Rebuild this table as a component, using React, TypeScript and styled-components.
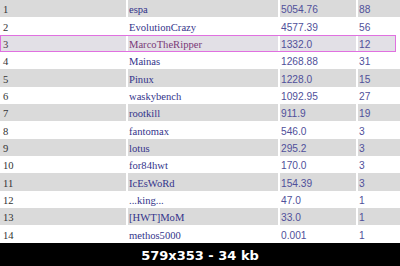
import React from "react";
import styled, { createGlobalStyle } from "styled-components";

const GlobalStyle = createGlobalStyle`
  html, body {
    margin: 0;
    padding: 0;
    background: #ffffff;
  }
  body {
    width: 400px;
    height: 266px;
    overflow: hidden;
  }
`;

const Page = styled.div`
  display: flex;
  flex-direction: column;
  width: 400px;
  height: 266px;
`;

const Table = styled.div`
  display: flex;
  flex-direction: column;
  height: 243px;
`;

const Row = styled.div<{ $shaded: boolean; $mine: boolean }>`
  display: grid;
  column-gap: 2px;
  height: calc(243px / 14);
  position: relative;
  width: ${(props) => (props.$mine ? "396px" : "400px")};
  grid-template-columns: ${(props) =>
    props.$mine ? "126px 150px 76px 38px" : "126px 150px 76px 42px"};

  & > div {
    background: ${(props) =>
      props.$mine ? "#e2e0e6" : props.$shaded ? "#dadada" : "#ffffff"};
  }

  &::after {
    content: "";
    display: ${(props) => (props.$mine ? "block" : "none")};
    position: absolute;
    inset: 0;
    border: 1px solid #e070e0;
    pointer-events: none;
  }
`;

const Cell = styled.div<{ $kind: "rank" | "name" | "num"; $mine?: boolean }>`
  display: flex;
  align-items: center;
  padding: 2px 0 0 ${(props) => (props.$kind === "rank" ? "3px" : "1px")};
  box-sizing: border-box;
  white-space: nowrap;
  overflow: hidden;
  font-family: ${(props) =>
    props.$kind === "num"
      ? '"Liberation Sans", Arial, sans-serif'
      : '"Liberation Serif", "Times New Roman", serif'};
  font-size: ${(props) => (props.$kind === "num" ? "10.2px" : "10.6px")};
  color: ${(props) =>
    props.$kind === "rank"
      ? props.$mine
        ? "#4a3a4a"
        : "#333333"
      : props.$kind === "name"
      ? props.$mine
        ? "#7a3a78"
        : "#33338a"
      : "#50509a"};
`;

const Footer = styled.div`
  flex: 1;
  background: #000000;
  display: flex;
  align-items: center;
  justify-content: center;
  padding-top: 1px;
  color: #ffffff;
  font-family: "DejaVu Sans", Verdana, sans-serif;
  font-weight: bold;
  font-size: 13px;
`;

const players = [
  { rank: 1, name: "espa", score: "5054.76", count: "88" },
  { rank: 2, name: "EvolutionCrazy", score: "4577.39", count: "56" },
  { rank: 3, name: "MarcoTheRipper", score: "1332.0", count: "12" },
  { rank: 4, name: "Mainas", score: "1268.88", count: "31" },
  { rank: 5, name: "Pinux", score: "1228.0", count: "15" },
  { rank: 6, name: "waskybench", score: "1092.95", count: "27" },
  { rank: 7, name: "rootkill", score: "911.9", count: "19" },
  { rank: 8, name: "fantomax", score: "546.0", count: "3" },
  { rank: 9, name: "lotus", score: "295.2", count: "3" },
  { rank: 10, name: "for84hwt", score: "170.0", count: "3" },
  { rank: 11, name: "IcEsWoRd", score: "154.39", count: "3" },
  { rank: 12, name: "...king...", score: "47.0", count: "1" },
  { rank: 13, name: "[HWT]MoM", score: "33.0", count: "1" },
  { rank: 14, name: "methos5000", score: "0.001", count: "1" },
];

const App = () => {
  return (
    <Page>
      <GlobalStyle />
      <Table>
        {players.map((p) => {
          const mine = p.name === "MarcoTheRipper";
          return (
            <Row key={p.rank} $shaded={p.rank % 2 === 1} $mine={mine}>
              <Cell $kind="rank" $mine={mine}>
                {p.rank}
              </Cell>
              <Cell $kind="name" $mine={mine}>
                {p.name}
              </Cell>
              <Cell $kind="num">{p.score}</Cell>
              <Cell $kind="num">{p.count}</Cell>
            </Row>
          );
        })}
      </Table>
      <Footer>579x353 - 34 kb</Footer>
    </Page>
  );
};

export default App;
